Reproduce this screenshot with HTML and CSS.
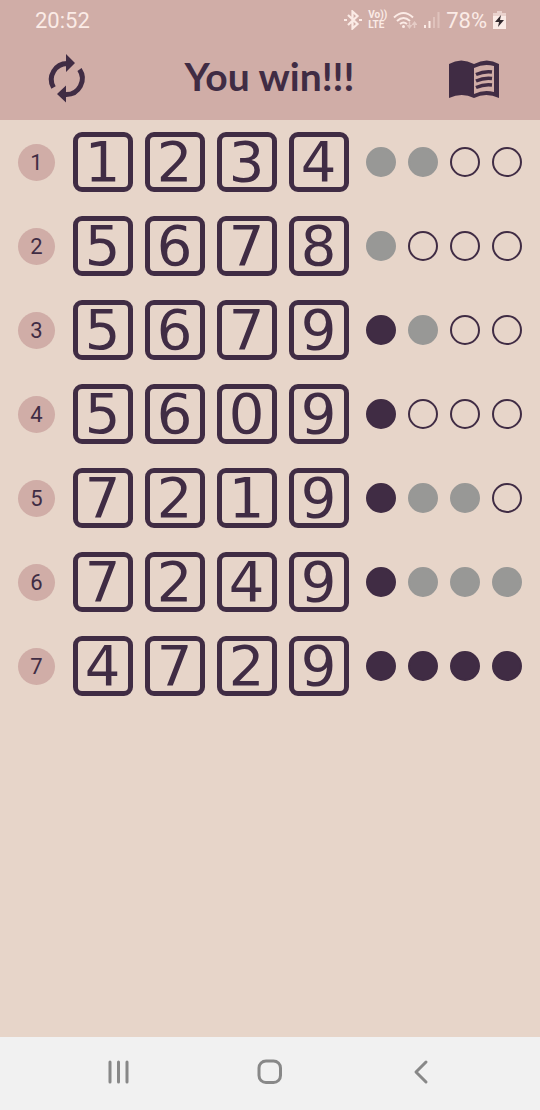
FILE: index.html
```
<!DOCTYPE html>
<html lang="en">
<head>
<meta charset="utf-8">
<meta name="viewport" content="width=device-width, initial-scale=1">
<title>You win!!!</title>
<link rel="stylesheet" href="styles.css">
</head>
<body>
<header class="top">
  <div class="status">
    <time class="clock">20:52</time>
    <div class="indicators">
      <svg width="18" height="20" viewBox="0 0 18 20" fill="none" stroke="currentColor" stroke-width="2.200"><path d="M4 5l9.500 9-5 4.500v-17l5 4.500L4 15"/><path d="M0 10h3M15 10h3"/></svg>
      <span class="volte"><span>Vo))</span><span>LTE</span></span>
      <svg width="24" height="20" viewBox="0 0 24 20" fill="none" stroke="currentColor" stroke-width="2"><path d="M1 7.500q9.500-9 19 0M4 11q6.500-6 13 0M7 14q3.500-3 7 0"/><circle cx="10.500" cy="16.500" r="1.500" fill="currentColor" stroke="none"/><g opacity=".5"><path d="M16.500 12v4M21.500 18v-4" stroke-width="1.500"/><path d="M13.500 15h6l-3 4zM18.500 15l3-4 3 4z" fill="currentColor" stroke="none"/></g></svg>
      <svg width="17" height="20" viewBox="0 0 17 20" fill="currentColor"><path d="M1 15h2v3H1zM5.500 11h2v7h-2z"/><path opacity=".35" d="M10 7h2v11h-2zM14.500 2h2v16h-2z"/></svg>
      <span class="percent">78%</span>
      <svg width="13" height="20" viewBox="0 0 13 20"><path fill="currentColor" opacity=".6" d="M4 1h5v2h4v3H0V3h4z"/><path fill="currentColor" d="M0 6h13v13H0z"/><path fill="#33292e" d="M8 5l-6 7h4l-1 5 6-7H7z"/></svg>
    </div>
  </div>
  <div class="appbar">
    <button class="icon-button" type="button" aria-label="New game">
      <svg width="48" height="52" viewBox="0 0 48 52"><path d="M11.500 35.500A16 16 0 0 1 26 11.500M37.500 17.500A16 16 0 0 1 24 42.500" fill="none" stroke="currentColor" stroke-width="5"/><path d="M24 2l9 9-9 9zM24 33.500v17L15 42z" fill="currentColor"/></svg>
    </button>
    <h1>You win!!!</h1>
    <button class="icon-button" type="button" aria-label="Rules">
      <svg width="50" height="44" viewBox="0 -4 50 44"><path fill="currentColor" fill-rule="evenodd" d="M0 4Q12-3 25 4 38-3 50 4v34q-13-6-25 0-12-6-25 0zM25 8v26q10-5 20-2V6q-10-3-20 2z"/><path fill="none" stroke="currentColor" stroke-width="3.500" d="M27 14.500q8-3.500 16-2.500M27 21q8-3.500 16-2.500M27 27.500q8-3.500 16-2.500"/></svg>
    </button>
  </div>
</header>
<main>
  <ol class="board"></ol>
</main>
<nav class="system" aria-label="System">
  <button type="button" aria-label="Recent apps"><svg width="26" height="26" viewBox="0 0 26 26"><path d="M4 3v20M12.500 3v20M21 3v20"/></svg></button>
  <button type="button" aria-label="Home"><svg width="26" height="26" viewBox="0 0 26 26"><rect x="2" y="2" width="21.500" height="21.500" rx="7"/></svg></button>
  <button type="button" aria-label="Back"><svg width="26" height="26" viewBox="0 0 26 26"><path d="M18 3L8 13 18 23"/></svg></button>
</nav>
<script src="board.js"></script>
</body>
</html>
```
FILE: styles.css
```
* {
  box-sizing: border-box;
}

body {
  margin: 0;
  min-height: 100vh;
  display: flex;
  flex-direction: column;
  background: #e7d5c9;
  color: #402c44;
  font-family: Roboto, sans-serif;
}

svg {
  display: block;
}

button {
  border: 0;
  padding: 0;
  background: none;
  color: inherit;
}

.top {
  background: #d0ada7;
}

.status {
  display: flex;
  align-items: center;
  justify-content: space-between;
  height: 40px;
  padding: 0 34px 0 35px;
  color: #fbebe6;
}

.clock {
  font-size: 22px;
}

.indicators {
  display: flex;
  align-items: center;
  gap: 6px;
}

.volte {
  display: flex;
  flex-direction: column;
  font-size: 10px;
  font-weight: 700;
  line-height: 10px;
}

.percent {
  font-size: 22px;
}

.appbar {
  display: flex;
  align-items: center;
  justify-content: space-between;
  height: 80px;
  padding: 0 41px 4px 42px;
}

h1 {
  margin: 0;
  padding-bottom: 4px;
  font: 700 39px/48px Lato, sans-serif;
}

main {
  flex: 1;
}

.board {
  display: flex;
  flex-direction: column;
  gap: 24px;
  margin: 0;
  padding: 12px 18px;
  list-style: none;
}

.guess {
  display: flex;
  align-items: center;
  justify-content: space-between;
}

.number {
  width: 37px;
  height: 37px;
  border-radius: 50%;
  background: #d0ada7;
  font-size: 22px;
  line-height: 37px;
  text-align: center;
}

.tiles,
.pegs {
  display: flex;
  gap: 12px;
}

.tile {
  display: flex;
  align-items: center;
  justify-content: center;
  width: 60px;
  height: 60px;
  border: 5px solid #402c44;
  border-radius: 9px;
  font: 400 56px/60px "DejaVu Sans", sans-serif;
}

.peg {
  width: 30px;
  height: 30px;
  border: 2px solid #402c44;
  border-radius: 50%;
}

.exact {
  background: #402c44;
}

.near {
  border-color: #989896;
  background: #989896;
}

.system {
  display: flex;
  align-items: center;
  justify-content: space-between;
  height: 73px;
  padding: 0 106px 4px;
  background: #f1f1f1;
  color: #888;
}

.system svg {
  fill: none;
  stroke: currentColor;
  stroke-width: 3px;
  stroke-linecap: round;
  stroke-linejoin: round;
}
```
FILE: board.js
```
const guesses = [
  { digits: "1234", exact: 0, near: 2 },
  { digits: "5678", exact: 0, near: 1 },
  { digits: "5679", exact: 1, near: 1 },
  { digits: "5609", exact: 1, near: 0 },
  { digits: "7219", exact: 1, near: 2 },
  { digits: "7249", exact: 1, near: 3 },
  { digits: "4729", exact: 4, near: 0 }
];

const tile = digit => `<span class="tile">${digit}</span>`;

const peg = (guess, i) => {
  const kind = i < guess.exact ? "exact" : i < guess.exact + guess.near ? "near" : "";
  return `<span class="peg ${kind}"></span>`;
};

document.querySelector(".board").innerHTML = guesses.map((guess, row) => `
  <li class="guess">
    <span class="number">${row + 1}</span>
    <div class="tiles">${[...guess.digits].map(tile).join("")}</div>
    <div class="pegs">${[0, 1, 2, 3].map(i => peg(guess, i)).join("")}</div>
  </li>`).join("");
```
